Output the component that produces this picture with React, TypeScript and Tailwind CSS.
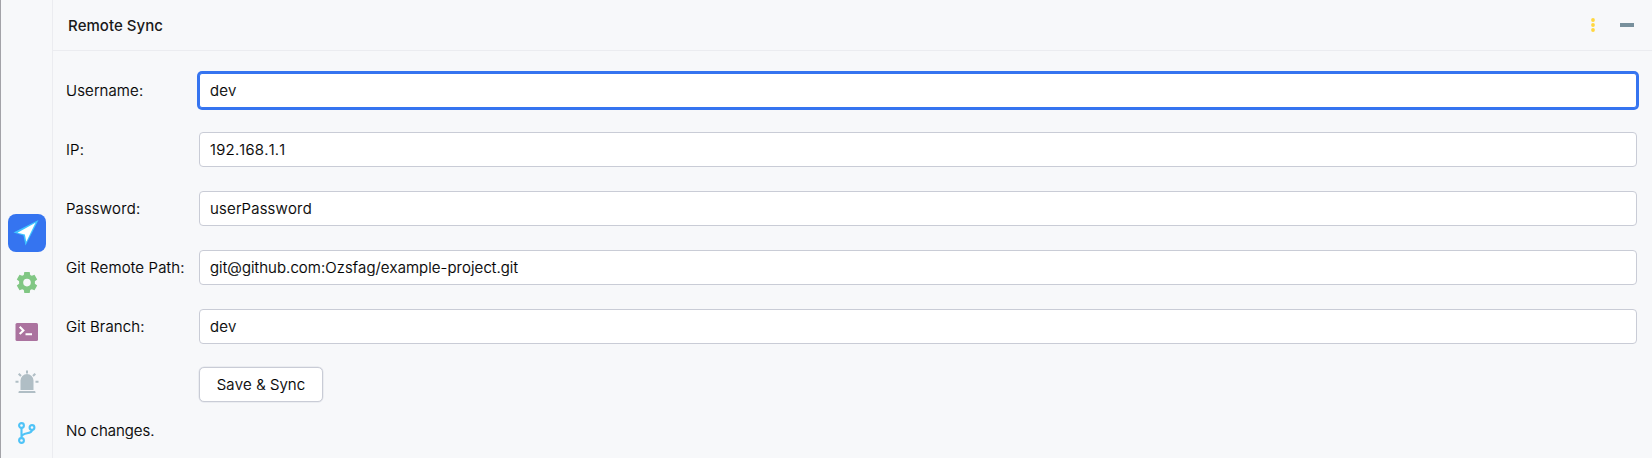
const fields = [
  { label: "Username:", value: "dev", tracking: "tracking-[0.1px]", focused: true },
  { label: "IP:", value: "192.168.1.1", tracking: "tracking-[0.25px]" },
  { label: "Password:", value: "userPassword", tracking: "tracking-[0.22px]" },
  { label: "Git Remote Path:", value: "git@github.com:Ozsfag/example-project.git", tracking: "tracking-[0.08px]" },
  { label: "Git Branch:", value: "dev", tracking: "tracking-[0.1px]" },
];

function Sidebar() {
  return (
    <nav className="flex w-[53px] shrink-0 flex-col items-center border-r border-l border-r-[#ebecf0] border-l-[#a3a3a8] pt-[214px]">
      <button className="flex size-[38px] items-center justify-center rounded-lg bg-[#3574f0]">
        <svg width="38" height="38" viewBox="0 0 38 38">
          <path d="M30.5 6 5.5 18.5l10 3L17.5 31.5Z" fill="#40c4ff" />
          <path d="M27.5 8.8 9.5 18.7l7.4 1.7 1.4 7.3Z" fill="#fff" />
        </svg>
      </button>
      <svg className="mt-[20px]" width="22" height="22" viewBox="0 0 22 22">
        <path
          fillRule="evenodd"
          fill="#81c784"
          d="M8.3 0h5.4l.5 2.9 1.6.9 2.7-1 2.7 4.6-2.3 1.9v2.4l2.3 1.9-2.7 4.6-2.7-1-1.6.9-.5 2.9H8.3l-.5-2.9-1.6-.9-2.7 1L.8 13.6l2.3-1.9V9.3L.8 7.4l2.7-4.6 2.7 1 1.6-.9ZM11 6.800a3.800 3.800 0 1 0 0 7.600 3.800 3.800 0 0 0 0-7.600Z"
        />
      </svg>
      <svg className="mt-[29px]" width="24" height="18" viewBox="0 0 24 18">
        <rect x=".5" width="22.5" height="18" rx="1.5" fill="#ab739f" />
        <path d="m4.700 3.700 3.700 3.700-3.700 3.700M10.500 11.200h6.500" fill="none" stroke="#fff" strokeWidth="2.1" />
      </svg>
      <svg className="mt-[29px]" width="24" height="24" viewBox="0 0 24 24">
        <path d="M5.5 20V10.5a6.500 6.500 0 0 1 13 0V20ZM3.500 23v-.700c0-.700.600-1.200 1.200-1.200h14.600c.7 0 1.200.500 1.200 1.200v.700Z" fill="#b0bec5" />
        <path d="M12 .5v3M3.700 3.700 6 6M20.300 3.700 18 6M.5 11.700h3M20.500 11.700h3" stroke="#b0bec5" strokeWidth="2" />
      </svg>
      <svg className="mt-[28px]" width="20" height="22" viewBox="0 0 20 22">
        <g fill="none" stroke="#4fc3f7" strokeWidth="2.1">
          <circle cx="4.5" cy="3.5" r="2.4" />
          <circle cx="4.5" cy="18.5" r="2.4" />
          <circle cx="15" cy="5.5" r="2.4" />
          <path d="M4.500 6v10M15 8c0 5-10.500 1.500-10.500 7.500" />
        </g>
      </svg>
    </nav>
  );
}

export default function App() {
  return (
    <div className="flex h-[458px] w-full overflow-hidden bg-[#f7f8fa] font-['Inter',sans-serif] text-[15px] leading-[20px] font-light text-black [font-kerning:none] [-webkit-text-stroke:0.2px_black]">
      <Sidebar />
      <main className="min-w-0 flex-1">
        <header className="flex h-[51px] items-center justify-between border-b border-[#ebecf0] pr-[18px] pl-[15px]">
          <h1 className="pt-[2px] font-medium text-[#1a1a1a] [-webkit-text-stroke:0]">Remote Sync</h1>
          <div className="flex items-center gap-[25px]">
            <svg width="4" height="14" viewBox="0 0 4 14" fill="#ffd740">
              <circle cx="2" cy="2" r="1.9" />
              <circle cx="2" cy="7" r="1.9" />
              <circle cx="2" cy="12" r="1.9" />
            </svg>
            <div className="h-[4px] w-[14px] bg-[#78909c]" />
          </div>
        </header>
        <form className="flex flex-col pt-[22px] pr-[15px] pl-[13px]">
          <div className="flex flex-col gap-[24px]">
            {fields.map((f) => (
              <label key={f.label} className="flex h-[35px] items-center">
                <span className="w-[133px] shrink-0 tracking-[0.15px]">{f.label}</span>
                <input
                  defaultValue={f.value}
                  className={`h-[35px] min-w-0 flex-1 border bg-white pl-[10px] outline-none ${f.tracking} ${
                    f.focused
                      ? "rounded-[3px] border-[#3574f0] shadow-[0_0_0_2px_#3574f0]"
                      : "rounded-[4px] border-[#c9ccd6]"
                  }`}
                />
              </label>
            ))}
          </div>
          <button
            type="button"
            className="mt-[23px] ml-[133px] h-[35px] w-[124px] rounded-[5px] border border-[#c9ccd6] bg-white tracking-[0.08px] shadow-[0_0_0_0.5px_#dfe1e8]"
          >
            Save &amp; Sync
          </button>
          <p className="mt-[19px]">No changes.</p>
        </form>
      </main>
    </div>
  );
}
